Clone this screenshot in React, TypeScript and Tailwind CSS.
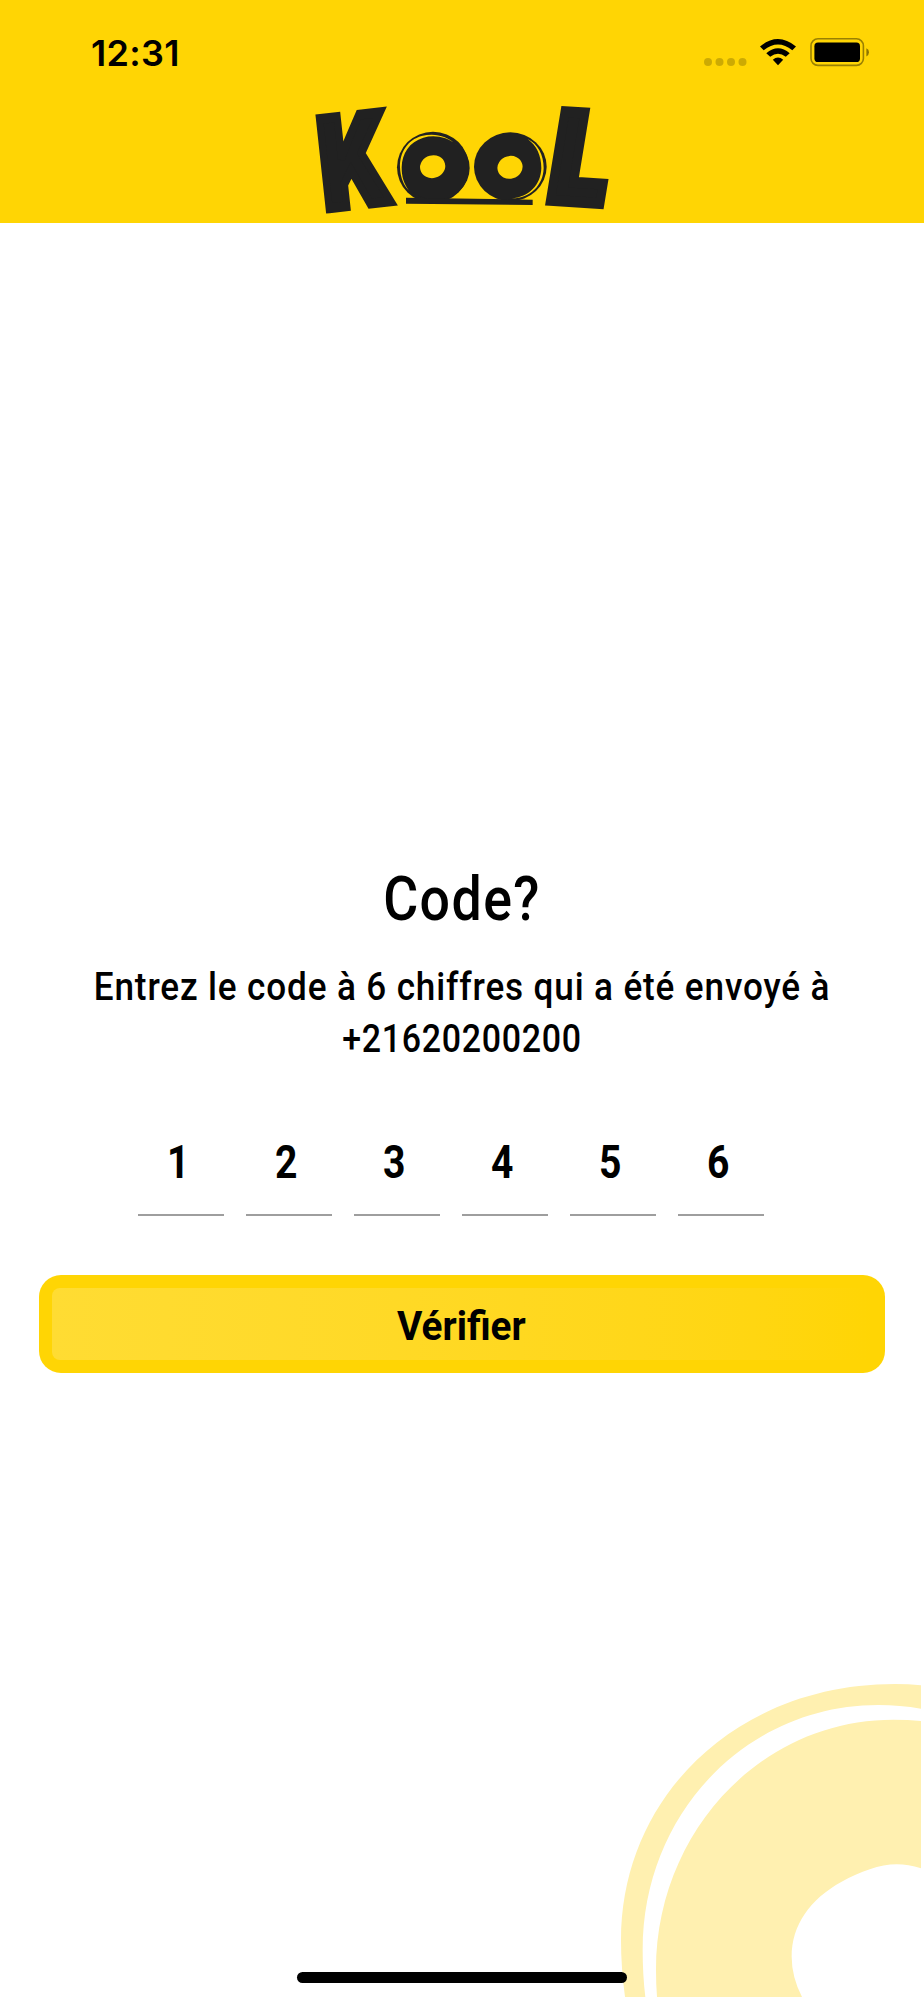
import { useState } from "react";

const YELLOW = "#ffd504";
const DARK = "#212121";

function StatusBar() {
  return (
    <div className="flex h-[104px] items-start justify-between pl-[91px] pr-[54px] pt-[32px]">
      <span className="font-['Inter',sans-serif] text-[36px] font-semibold leading-[42px] tracking-[0.3px] text-black">
        12:31
      </span>
      <svg width="168" height="32" viewBox="0 0 168 32" className="mt-[4px]" aria-hidden="true">
        {/* Signal dots */}
        <g fill="#000" fillOpacity="0.2">
          <circle cx="6" cy="26" r="4" />
          <circle cx="17.5" cy="26" r="4" />
          <circle cx="29" cy="26" r="4" />
          <circle cx="40.5" cy="26" r="4" />
        </g>
        {/* Wifi */}
        <path d="M58 10.5Q76 -4.6 94 10.5L90.3 14.2Q76 2.8 61.7 14.2Z" />
        <path d="M64.3 17.2Q76 7.2 87.7 17.2L83.8 20.8Q76 14.6 68.2 20.8Z" />
        <path d="M70.8 23.8Q76 19.3 81.2 23.8L76 29.2Z" />
        {/* Battery */}
        <rect x="109" y="2.8" width="52.4" height="26.6" rx="7" fill="none" stroke="#000" strokeOpacity="0.4" strokeWidth="1.6" />
        <rect x="112.4" y="6.6" width="45.6" height="19.4" rx="3.6" />
        <path d="M164.4 12.2Q167 13.4 167 16.2T164.4 20.4Z" fillOpacity="0.45" />
      </svg>
    </div>
  );
}

function Logo() {
  return (
    <svg
      width="320"
      height="118"
      viewBox="0 30 960 354"
      className="overflow-visible"
      fill={DARK}
      role="img"
      aria-label="Kool"
    >
      <text
        transform="matrix(2.68 -0.3 0.4 3.68 75 356)"
        className="font-['Inter',sans-serif] text-[100px] font-black"
        stroke={DARK}
        strokeWidth="8"
      >
        K
      </text>
      {/* Left wheel */}
      <ellipse cx="399" cy="232" rx="108" ry="107" />
      <ellipse cx="408" cy="234" rx="101" ry="96" />
      <path d="M470 165C440 136 402 128 365 138C322 150 299 188 300 232C301 262 311 287 327 302C311 281 305 260 305 232C306 190 328 156 370 143C404 134 440 140 470 165Z" fill={YELLOW} />
      <ellipse cx="398" cy="230" rx="38" ry="34" transform="rotate(-15 398 230)" fill={YELLOW} />
      {/* Right wheel */}
      <ellipse cx="631" cy="230" rx="109" ry="103" />
      <path d="M683 147C714 162 731 195 731 234C730 286 690 326 635 325C686 322 723 284 724 234C724 197 710 167 683 147Z" fill={YELLOW} />
      <ellipse cx="630" cy="232" rx="38" ry="34" transform="rotate(-15 630 232)" fill={YELLOW} />
      {/* Road */}
      <path d="M318 323L698 329V345L318 341Z" />
      <text
        transform="matrix(3.02 0.19 -0.6 3.65 737 330)"
        className="font-['Inter',sans-serif] text-[100px] font-black"
        stroke={DARK}
        strokeWidth="9"
      >
        L
      </text>
    </svg>
  );
}

function WheelDecoration() {
  return (
    <svg
      width="321"
      height="337"
      viewBox="0 0 963 1011"
      className="absolute bottom-[3px] right-[3px]"
      fill="#fff0b0"
      aria-hidden="true"
    >
      <path d="M75 1011C67 950 63 895 63 840C63 410 410 72 885 72Q925 72 963 76V146Q900 135 835 135C440 135 128 460 128 870Q128 945 136 1011Z" />
      <path d="M171 1011Q168 975 168 930C168 520 480 179 880 179Q925 179 963 183V625Q925 613 890 613C840 613 780 635 725 665C630 717 575 795 575 890Q575 950 606 1011Z" />
    </svg>
  );
}

export default function App() {
  const [code] = useState("123456");

  return (
    <div className="relative flex h-[2000px] w-[924px] flex-col overflow-hidden bg-white font-['Roboto',sans-serif] text-black">
      <header className="h-[222.5px] bg-[#ffd504]">
        <StatusBar />
        <div className="-mt-1 flex pl-[300px]">
          <Logo />
        </div>
      </header>

      <WheelDecoration />

      <main className="flex flex-col px-[39px] pt-[641px]">
        <h1 className="scale-x-[0.88] text-center text-[61px] font-medium leading-[70px] tracking-[1.6px]">Code?</h1>
        <p className="mt-[27px] text-center text-[39px] leading-[52px]">
          <span className="block scale-x-[0.9] whitespace-nowrap font-medium tracking-[0.95px]">
            Entrez le code à 6 chiffres qui a été envoyé à
          </span>
          <span className="block scale-x-[0.87] font-medium tracking-[0.8px]">+21620200200</span>
        </p>

        <div className="mt-[48px] flex gap-[22px] pl-[99px]">
          {code.split("").map((digit, index) => (
            <div
              key={index}
              className="h-[103px] w-[86px] border-b-2 border-[#9e9e9e] pr-[6px] pt-[22px] text-center text-[46px] font-bold leading-[54px]"
            >
              <span className="inline-block scale-x-[0.85]">{digit}</span>
            </div>
          ))}
        </div>

        <button className="mt-[59px] h-[98px] w-full rounded-[22px] bg-[#ffd504] p-[13px]">
          <span className="flex h-full items-center justify-center rounded-[8px] bg-gradient-to-r from-[#ffdc33] to-[#ffd504] pr-[2px] pt-1.5 text-[40px] font-bold leading-none">
            <span className="scale-x-[0.97]">Vérifier</span>
          </span>
        </button>
      </main>

      {/* Home indicator */}
      <div className="absolute bottom-[17px] left-[297px] h-[11px] w-[330px] rounded-full bg-black" />
    </div>
  );
}
